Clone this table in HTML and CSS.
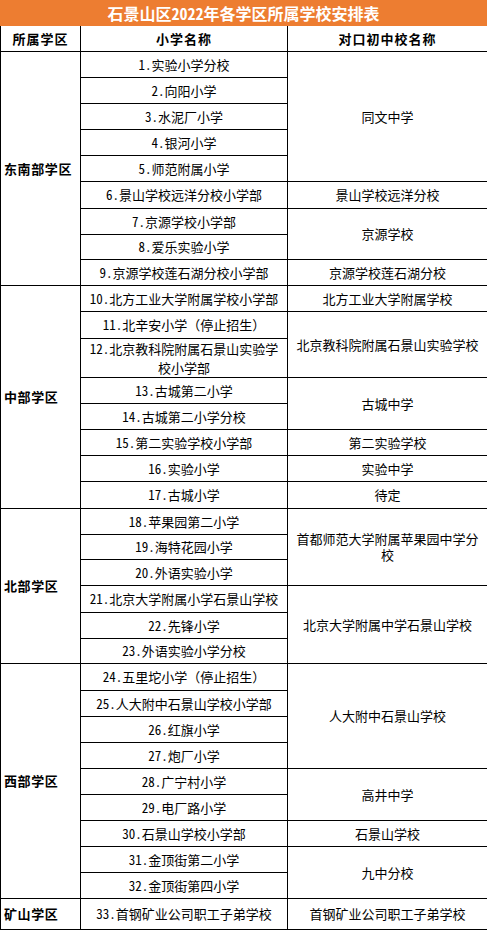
FILE: index.html
```html
<!DOCTYPE html>
<html lang="zh-CN">
<head>
<meta charset="utf-8">
<title>石景山区2022年各学区所属学校安排表</title>
<link rel="stylesheet" href="styles.css">
</head>
<body>
<div class="sheet">
  <div class="title">石景山区2022年各学区所属学校安排表</div>
  <table class="grid">
    <colgroup>
      <col class="c1"><col class="c2"><col class="c3">
    </colgroup>
    <thead>
      <tr class="head">
        <th>所属学区</th>
        <th>小学名称</th>
        <th>对口初中校名称</th>
      </tr>
    </thead>
    <tbody>
      <tr><td class="district" rowspan="9">东南部学区</td><td>1.实验小学分校</td><td rowspan="5">同文中学</td></tr>
      <tr><td>2.向阳小学</td></tr>
      <tr><td>3.水泥厂小学</td></tr>
      <tr><td>4.银河小学</td></tr>
      <tr><td>5.师范附属小学</td></tr>
      <tr class="tall"><td>6.景山学校远洋分校小学部</td><td>景山学校远洋分校</td></tr>
      <tr><td>7.京源学校小学部</td><td rowspan="2">京源学校</td></tr>
      <tr class="short"><td>8.爱乐实验小学</td></tr>
      <tr><td>9.京源学校莲石湖分校小学部</td><td>京源学校莲石湖分校</td></tr>

      <tr><td class="district" rowspan="8">中部学区</td><td>10.北方工业大学附属学校小学部</td><td>北方工业大学附属学校</td></tr>
      <tr class="tall"><td>11.北辛安小学<span class="fw">（停止招生）</span></td><td rowspan="2">北京教科院附属石景山实验学校</td></tr>
      <tr class="double"><td>12.北京教科院附属石景山实验学<br>校小学部</td></tr>
      <tr><td>13.古城第二小学</td><td rowspan="2">古城中学</td></tr>
      <tr><td>14.古城第二小学分校</td></tr>
      <tr><td>15.第二实验学校小学部</td><td>第二实验学校</td></tr>
      <tr><td>16.实验小学</td><td>实验中学</td></tr>
      <tr class="tall"><td>17.古城小学</td><td>待定</td></tr>

      <tr><td class="district" rowspan="6">北部学区</td><td>18.苹果园第二小学</td><td rowspan="3">首都师范大学附属苹果园中学分校</td></tr>
      <tr class="short"><td>19.海特花园小学</td></tr>
      <tr><td>20.外语实验小学</td></tr>
      <tr class="tall"><td>21.北京大学附属小学石景山学校</td><td rowspan="3">北京大学附属中学石景山学校</td></tr>
      <tr><td>22.先锋小学</td></tr>
      <tr class="short"><td>23.外语实验小学分校</td></tr>

      <tr class="tall"><td class="district" rowspan="9">西部学区</td><td>24.五里坨小学<span class="fw">（停止招生）</span></td><td rowspan="4">人大附中石景山学校</td></tr>
      <tr><td>25.人大附中石景山学校小学部</td></tr>
      <tr><td>26.红旗小学</td></tr>
      <tr><td>27.炮厂小学</td></tr>
      <tr><td>28.广宁村小学</td><td rowspan="2">高井中学</td></tr>
      <tr><td>29.电厂路小学</td></tr>
      <tr><td>30.石景山学校小学部</td><td>石景山学校</td></tr>
      <tr><td>31.金顶街第二小学</td><td rowspan="2">九中分校</td></tr>
      <tr><td>32.金顶街第四小学</td></tr>

      <tr class="last"><td class="district">矿山学区</td><td>33.首钢矿业公司职工子弟学校</td><td>首钢矿业公司职工子弟学校</td></tr>
    </tbody>
  </table>
</div>
</body>
</html>
```

FILE: styles.css
```css
html, body {
  margin: 0;
  padding: 0;
  background: #ffffff;
}

.sheet {
  width: 487px;
  font-family: "Noto Sans CJK SC", "Noto Sans", sans-serif;
  font-feature-settings: "hwid" 1;
  color: #000000;
}

.fw {
  font-feature-settings: normal;
}

.title {
  height: 26px;
  line-height: 26px;
  background: #ed7d31;
  color: #ffffff;
  font-size: 16px;
  font-weight: bold;
  text-align: center;
}

.grid {
  width: 487px;
  border-collapse: collapse;
  table-layout: fixed;
}

.c1 { width: 80px; }
.c2 { width: 207px; }
.c3 { width: 200px; }

.grid th,
.grid td {
  border: 1px solid #000000;
  padding: 0 5px;
  height: 25px;
  font-size: 13px;
  line-height: 16px;
  text-align: center;
  vertical-align: middle;
  font-weight: normal;
}

.grid th {
  border-top: 0;
  height: 25px;
  font-weight: bold;
  letter-spacing: 1px;
}

.grid td.district {
  text-align: left;
  padding-left: 3px;
  font-weight: bold;
  letter-spacing: 0.6px;
}

.grid tr.tall td { height: 26px; }
.grid tr.short td { height: 24px; }
.grid tr.double td { height: 38px; line-height: 19px; }
.grid tr.last td { height: 30px; }
```
